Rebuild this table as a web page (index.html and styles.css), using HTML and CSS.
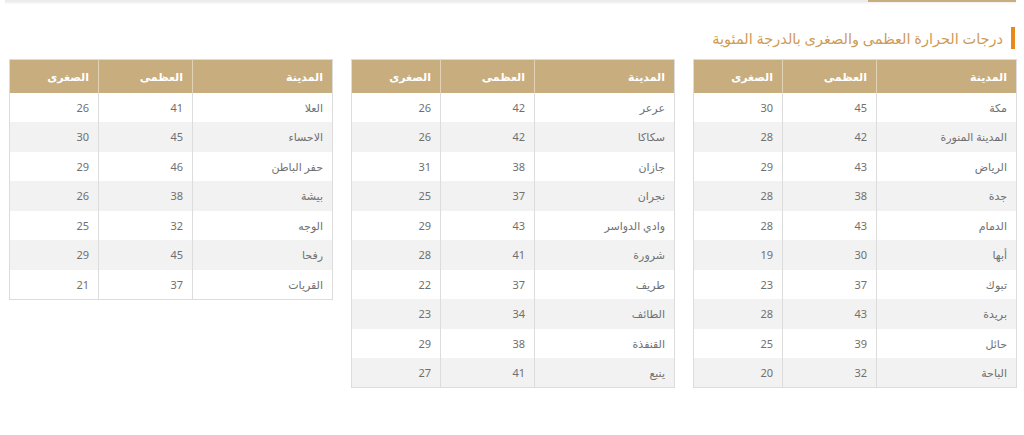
FILE: index.html
```html
<!DOCTYPE html>
<html lang="ar" dir="rtl">
<head>
<meta charset="utf-8">
<link rel="stylesheet" href="styles.css">
</head>
<body>
<div class="topline"><div class="topline-active"></div></div>
<h2 class="title">درجات الحرارة العظمى والصغرى بالدرجة المئوية</h2>
<div class="tables">
  <table class="temps">
    <thead><tr><th class="c-city">المدينة</th><th class="c-max">العظمى</th><th class="c-min">الصغرى</th></tr></thead>
    <tbody>
      <tr><td>مكة</td><td>45</td><td>30</td></tr>
      <tr><td>المدينة المنورة</td><td>42</td><td>28</td></tr>
      <tr><td>الرياض</td><td>43</td><td>29</td></tr>
      <tr><td>جدة</td><td>38</td><td>28</td></tr>
      <tr><td>الدمام</td><td>43</td><td>28</td></tr>
      <tr><td>أبها</td><td>30</td><td>19</td></tr>
      <tr><td>تبوك</td><td>37</td><td>23</td></tr>
      <tr><td>بريدة</td><td>43</td><td>28</td></tr>
      <tr><td>حائل</td><td>39</td><td>25</td></tr>
      <tr><td>الباحة</td><td>32</td><td>20</td></tr>
    </tbody>
  </table>
  <table class="temps">
    <thead><tr><th class="c-city">المدينة</th><th class="c-max">العظمى</th><th class="c-min">الصغرى</th></tr></thead>
    <tbody>
      <tr><td>عرعر</td><td>42</td><td>26</td></tr>
      <tr><td>سكاكا</td><td>42</td><td>26</td></tr>
      <tr><td>جازان</td><td>38</td><td>31</td></tr>
      <tr><td>نجران</td><td>37</td><td>25</td></tr>
      <tr><td>وادي الدواسر</td><td>43</td><td>29</td></tr>
      <tr><td>شرورة</td><td>41</td><td>28</td></tr>
      <tr><td>طريف</td><td>37</td><td>22</td></tr>
      <tr><td>الطائف</td><td>34</td><td>23</td></tr>
      <tr><td>القنفذة</td><td>38</td><td>29</td></tr>
      <tr><td>ينبع</td><td>41</td><td>27</td></tr>
    </tbody>
  </table>
  <table class="temps">
    <thead><tr><th class="c-city">المدينة</th><th class="c-max">العظمى</th><th class="c-min">الصغرى</th></tr></thead>
    <tbody>
      <tr><td>العلا</td><td>41</td><td>26</td></tr>
      <tr><td>الاحساء</td><td>45</td><td>30</td></tr>
      <tr><td>حفر الباطن</td><td>46</td><td>29</td></tr>
      <tr><td>بيشة</td><td>38</td><td>26</td></tr>
      <tr><td>الوجه</td><td>32</td><td>25</td></tr>
      <tr><td>رفحا</td><td>45</td><td>29</td></tr>
      <tr><td>القريات</td><td>37</td><td>21</td></tr>
    </tbody>
  </table>
</div>
</body>
</html>
```

FILE: styles.css
```css
html, body {
  margin: 0;
  padding: 0;
  background: #ffffff;
}
body {
  font-family: "Noto Sans", "DejaVu Sans", sans-serif;
  color: #666666;
}
.topline {
  height: 2px;
  margin: 0 8px 0 5px;
  background: #ececec;
  box-shadow: 0 1px 2px rgba(0,0,0,0.08);
  display: flex;
}
.topline-active {
  width: 148px;
  height: 2px;
  background: #c8ad7f;
}
.title {
  margin: 25px 9px 0 0;
  padding: 0 8px 0 0;
  border-right: 4px solid #e8891a;
  font-size: 14.5px;
  line-height: 22px;
  font-weight: normal;
  color: #cf9a55;
}
.tables {
  display: flex;
  align-items: flex-start;
  gap: 18px;
  padding: 10px 7px 0 8px;
}
.temps {
  width: 323px;
  border-collapse: collapse;
  border: 1px solid #dcdcdc;
  font-size: 11px;
  table-layout: fixed;
}
.temps th,
.temps td {
  box-sizing: border-box;
}
.temps th {
  background: #c8ad7f;
  color: #ffffff;
  font-weight: bold;
  height: 33px;
  padding: 0 9px;
  text-align: right;
  border-left: 1px solid #e2d3b6;
}
.temps th:last-child { border-left: none; }
.c-city { width: 140px; }
.c-max { width: 94px; }
.c-min { width: 89px; }
.temps td {
  height: 29.5px;
  padding: 0 9px;
  text-align: right;
  border-left: 1px solid #dcdcdc;
  color: #707070;
}
.temps td:last-child { border-left: none; }
.temps tbody tr:nth-child(even) td {
  background: #f2f2f2;
}
```
